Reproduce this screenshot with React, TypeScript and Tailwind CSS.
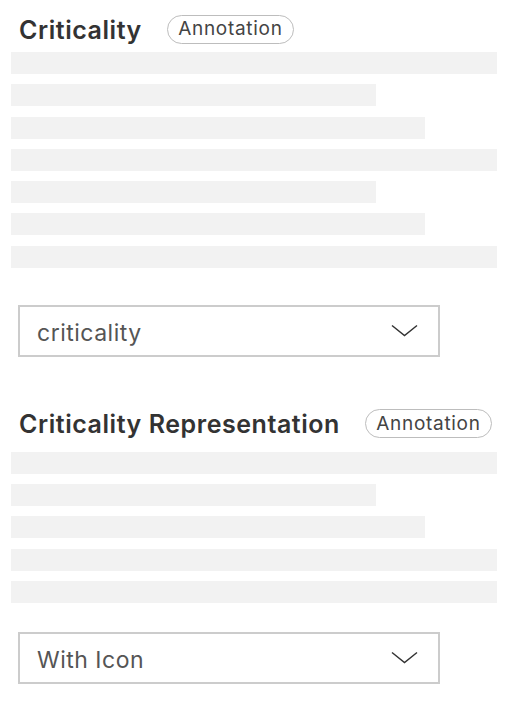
const font = { fontFamily: 'Inter, "Open Sans", sans-serif' };

function Chevron() {
  return (
    <svg width="27" height="13" viewBox="0 0 27 13" fill="none" className="shrink-0">
      <path d="M1 1.5 L13.5 11.5 L26 1.5" stroke="#333" strokeWidth="1.5" />
    </svg>
  );
}

function Skeleton({ widths }: { widths: string[] }) {
  return (
    <div className="flex flex-col gap-[10.3px] pl-[11px]">
      {widths.map((w, i) => (
        <div key={i} className={`h-[22px] bg-[#f2f2f2] ${w}`} />
      ))}
    </div>
  );
}

function Section({
  title,
  value,
  widths,
  barsTop,
  selectTop,
}: {
  title: string;
  value: string;
  widths: string[];
  barsTop: string;
  selectTop: string;
}) {
  return (
    <div>
      <div className="flex h-[30px] items-center gap-[25px] pl-[19px]">
        <h2 className="pt-[2px] text-[25px] font-semibold leading-none tracking-[0.55px] text-[#333]">
          {title}
        </h2>
        <span className="flex h-[29px] w-[127px] items-center justify-center rounded-full border-[1.5px] border-[#bdbdbd] text-[19px] tracking-[0.7px] text-[#444]">
          Annotation
        </span>
      </div>
      <div className={barsTop}>
        <Skeleton widths={widths} />
      </div>
      <div className={`${selectTop} pl-[18px]`}>
        <div className="flex h-[52px] w-[422px] items-center justify-between border-2 border-[#cccccc] pl-[17px] pr-[20px]">
          <span className="pt-[5px] text-[23px] tracking-[0.5px] text-[#555]">{value}</span>
          <Chevron />
        </div>
      </div>
    </div>
  );
}

export default function App() {
  return (
    <div className="h-[718px] w-[508px] bg-white pt-[14px]" style={font}>
      <Section
        title="Criticality"
        value="criticality"
        barsTop="mt-[8px]"
        selectTop="mt-[37px]"
        widths={[
          "w-[486px]",
          "w-[365px]",
          "w-[414px]",
          "w-[486px]",
          "w-[365px]",
          "w-[414px]",
          "w-[486px]",
        ]}
      />
      <div className="mt-[52px]">
        <Section
          title="Criticality Representation"
          value="With Icon"
          barsTop="mt-[13px]"
          selectTop="mt-[29px]"
          widths={["w-[486px]", "w-[365px]", "w-[414px]", "w-[486px]", "w-[486px]"]}
        />
      </div>
    </div>
  );
}
